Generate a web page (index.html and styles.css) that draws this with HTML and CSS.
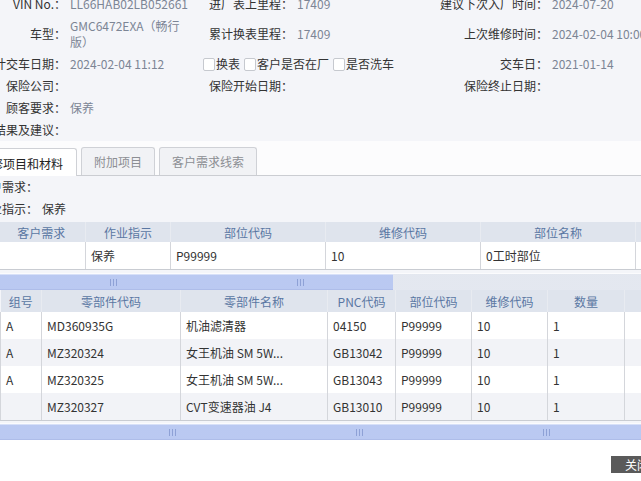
FILE: index.html
```html
<!DOCTYPE html>
<html lang="zh-CN">
<head>
  <meta charset="UTF-8">
  <title>维修工单</title>
  <link rel="stylesheet" href="styles.css">
</head>
<body>
  <div class="page">
    <div class="info">
      <div class="info-grid">
        <div class="lbl">VIN No.：</div>
        <div class="val">LL66HAB02LB052661</div>
        <div class="lbl">进厂表上里程：</div>
        <div class="val">17409</div>
        <div class="lbl">建议下次入厂时间：</div>
        <div class="val">2024-07-20</div>

        <div class="lbl">车型：</div>
        <div class="val wrap">GMC6472EXA（畅行<br>版）</div>
        <div class="lbl">累计换表里程：</div>
        <div class="val">17409</div>
        <div class="lbl">上次维修时间：</div>
        <div class="val">2024-02-04 10:00</div>

        <div class="lbl">预计交车日期：</div>
        <div class="val">2024-02-04 11:12</div>
        <div class="checks">
          <label class="check"><span class="box"></span>换表</label>
          <label class="check"><span class="box"></span>客户是否在厂</label>
          <label class="check"><span class="box"></span>是否洗车</label>
        </div>
        <div class="lbl">交车日：</div>
        <div class="val">2021-01-14</div>

        <div class="lbl">保险公司：</div>
        <div class="val"></div>
        <div class="lbl">保险开始日期：</div>
        <div class="val"></div>
        <div class="lbl">保险终止日期：</div>
        <div class="val"></div>

        <div class="lbl">顾客要求：</div>
        <div class="val">保养</div>
        <div></div><div></div><div></div><div></div>

        <div class="lbl">检查结果及建议：</div>
        <div class="val"></div>
        <div></div><div></div><div></div><div></div>
      </div>
    </div>

    <div class="tabs">
      <div class="tab active">检修项目和材料</div>
      <div class="tab">附加项目</div>
      <div class="tab">客户需求线索</div>
    </div>

    <div class="panel">
      <div class="req"><span class="req-lbl">客户需求：</span><span class="req-val"></span></div>
      <div class="req"><span class="req-lbl">作业指示：</span><span class="req-val">保养</span></div>

      <table class="grid work">
        <colgroup>
          <col style="width:88px"><col style="width:85px"><col style="width:155px">
          <col style="width:155px"><col style="width:155px"><col style="width:100px">
        </colgroup>
        <thead>
          <tr><th>客户需求</th><th>作业指示</th><th>部位代码</th><th>维修代码</th><th>部位名称</th><th>工时</th></tr>
        </thead>
        <tbody>
          <tr><td></td><td>保养</td><td>P99999</td><td>10</td><td>0工时部位</td><td>1</td></tr>
        </tbody>
      </table>
      <div class="hscroll">
        <div class="thumb short"><span class="grip"></span><span class="grip"></span></div>
      </div>

      <table class="grid parts">
        <colgroup>
          <col style="width:41px"><col style="width:139px"><col style="width:147px"><col style="width:68px">
          <col style="width:76px"><col style="width:76px"><col style="width:77px"><col style="width:100px">
        </colgroup>
        <thead>
          <tr><th>组号</th><th>零部件代码</th><th>零部件名称</th><th>PNC代码</th><th>部位代码</th><th>维修代码</th><th>数量</th><th>单价</th></tr>
        </thead>
        <tbody>
          <tr><td>A</td><td>MD360935G</td><td>机油滤清器</td><td>04150</td><td>P99999</td><td>10</td><td>1</td><td></td></tr>
          <tr><td>A</td><td>MZ320324</td><td>女王机油 SM 5W...</td><td>GB13042</td><td>P99999</td><td>10</td><td>1</td><td></td></tr>
          <tr><td>A</td><td>MZ320325</td><td>女王机油 SM 5W...</td><td>GB13043</td><td>P99999</td><td>10</td><td>1</td><td></td></tr>
          <tr><td></td><td>MZ320327</td><td>CVT变速器油 J4</td><td>GB13010</td><td>P99999</td><td>10</td><td>1</td><td></td></tr>
        </tbody>
      </table>
      <div class="hscroll bottom">
        <div class="thumb full"><span class="grip"></span><span class="grip"></span><span class="grip"></span></div>
      </div>
    </div>

    <div class="footer">
      <button class="close-btn">关闭</button>
    </div>
  </div>
</body>
</html>
```

FILE: styles.css
```css
body {
  margin: 0;
  background: #fff;
  font-family: "Noto Sans CJK SC", "Noto Sans", sans-serif;
  font-size: 12px;
  color: #333;
  overflow: hidden;
}
.page {
  width: 641px;
  height: 481px;
  overflow: hidden;
}
.info {
  background: #f4f5f9;
}
.info-grid {
  display: grid;
  grid-template-columns: 100px 134px 93px 147px 108px 150px;
  margin: -7px 0 0 -34px;
  align-items: center;
  line-height: 16px;
}
.info-grid > div {
  padding: 3px 0;
  white-space: nowrap;
  min-height: 16px;
}
.lbl {
  text-align: right;
}
.val {
  color: #7c8595;
  padding-left: 4px !important;
}
.val.wrap {
  white-space: normal;
}
.checks {
  grid-column: 3 / 5;
  display: flex;
  align-items: center;
  padding-left: 3px !important;
}
.check {
  display: flex;
  align-items: center;
  margin-right: 4px;
}
.box {
  width: 10px;
  height: 11px;
  border: 1px solid #c6c9cf;
  border-radius: 2px;
  background: #fff;
  margin-right: 1px;
}
.tabs {
  display: flex;
  align-items: flex-end;
  gap: 4px;
  height: 35px;
  box-sizing: border-box;
  padding-top: 6px;
  margin-left: -35px;
  background: #fcfcfd;
  border-bottom: 1px solid #cbcdd2;
}
.tab {
  height: 28px;
  box-sizing: border-box;
  border: 1px solid #cfd1d6;
  border-bottom: none;
  border-radius: 3px 3px 0 0;
  padding: 0 12px;
  line-height: 27px;
  background: #f1f2f5;
  color: #8c8e93;
}
.tab.active {
  background: #fff;
  color: #222;
  margin-bottom: -1px;
  height: 28px;
  padding: 1px 13px 0;
}
.panel {
  background: #f4f5f9;
}
.req {
  display: flex;
  height: 22px;
  line-height: 22px;
}
.req-lbl {
  width: 60px;
  margin-left: -22px;
  text-align: right;
}
.req-val {
  padding-left: 4px;
}
.grid {
  border-collapse: collapse;
  table-layout: fixed;
}
.grid th {
  background: #dfe4ed;
  color: #5a77a3;
  font-weight: normal;
  text-align: center;
  padding: 0;
  border-right: 1px solid #e8ebf1;
  white-space: nowrap;
  overflow: hidden;
}
.grid td {
  padding: 0 0 0 5px;
  white-space: nowrap;
  overflow: hidden;
  border-left: 1px solid #d4d6db;
  border-right: 1px solid #d4d6db;
  background: #fff;
}
.work {
  width: 738px;
  margin: 2px 0 0 -3px;
}
.work th {
  height: 20px;
}
.work td {
  height: 27px;
  border-bottom: 1px solid #c9ccd2;
}
.hscroll {
  height: 16px;
  margin-top: 3px;
  border-top: 1px solid #fbfbfd;
  background-color: #edf0f6;
  background-image: radial-gradient(#d9dde8 0.6px, transparent 0.8px);
  background-size: 2px 2px;
  display: flex;
}
.thumb {
  height: 100%;
  box-sizing: border-box;
  display: flex;
  align-items: center;
  gap: 180px;
  background-color: #c3d0f3;
  background-image: radial-gradient(#afc0ee 0.6px, transparent 0.8px);
  background-size: 2px 2px;
  border-top: 1px solid #d7e0f8;
  border-bottom: 1px solid #aebde9;
}
.thumb.short {
  width: 393px;
  padding-left: 110px;
}
.thumb.full {
  width: 100%;
  padding-left: 169px;
}
.grip {
  width: 7px;
  height: 7px;
  background: repeating-linear-gradient(90deg, #8ea1d6 0 1px, transparent 1px 3px);
}
.parts {
  width: 724px;
  margin-top: 0;
}
.parts th {
  height: 22px;
}
.parts td {
  height: 27px;
}
.parts tbody tr:nth-child(even) td {
  background: #f2f3f7;
}
.parts tbody tr:last-child td {
  border-bottom: 1px solid #c9ccd2;
}
.hscroll.bottom {
  margin-top: 2px;
}
.footer {
  background: #fff;
  display: flex;
  justify-content: flex-end;
  padding-top: 16px;
}
.close-btn {
  margin-right: -22px;
  height: 17px;
  padding: 0 14px;
  border: none;
  background: #5a5a5a;
  color: #fff;
  font-family: inherit;
  font-size: 12px;
  line-height: 17px;
}
```
